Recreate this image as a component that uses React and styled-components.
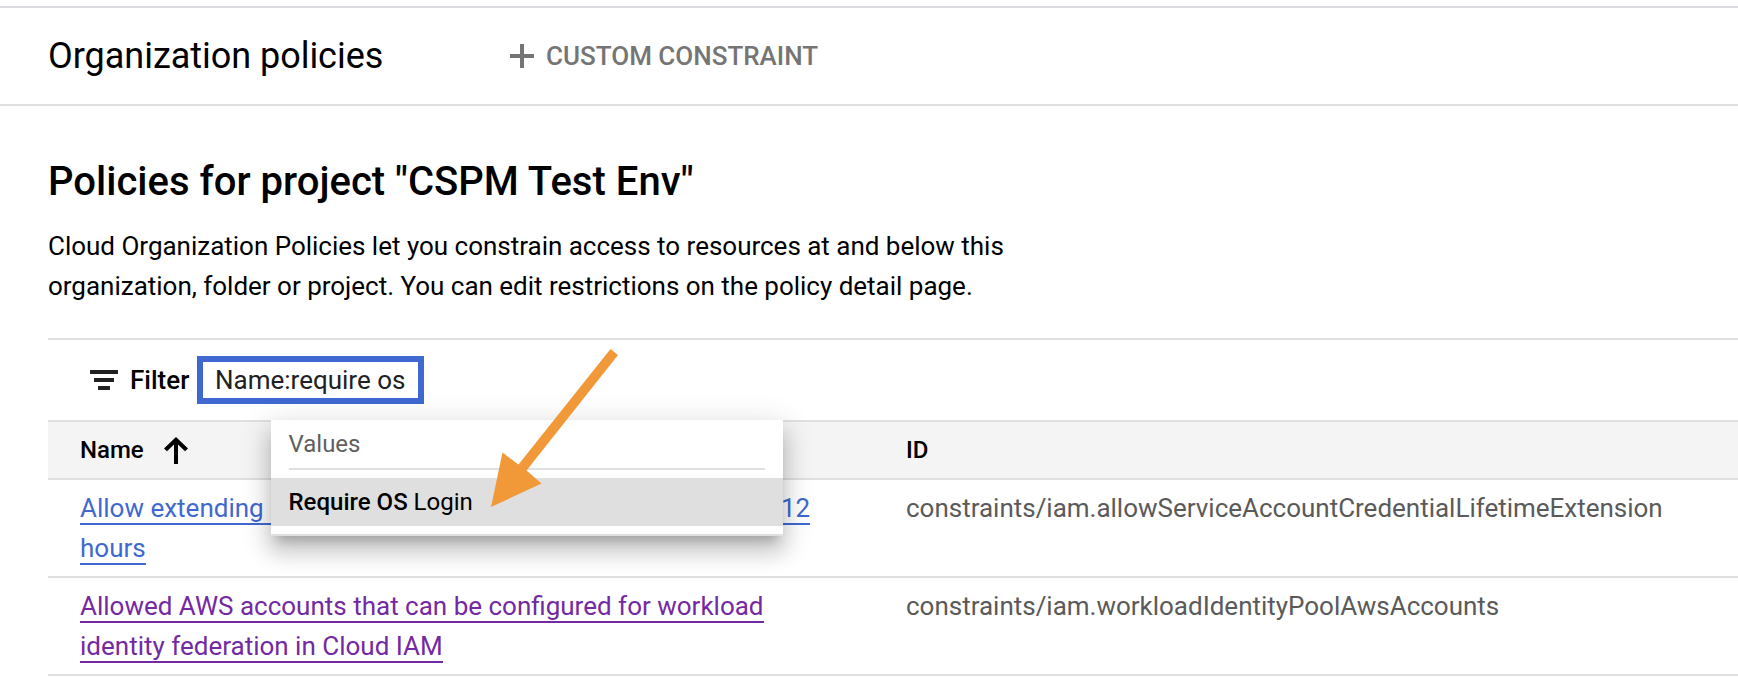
import React from "react";
import styled, { createGlobalStyle } from "styled-components";

const Global = createGlobalStyle`
  * { box-sizing: border-box; }
  body { margin: 0; background: #fff; }
`;

const Page = styled.div`
  height: 678px;
  overflow: hidden;
  padding-top: 6px;
  background: #fff;
  color: #000;
  font: 400 26px/40px Roboto, sans-serif;
`;

const Toolbar = styled.header`
  display: flex;
  align-items: center;
  height: 100px;
  padding-left: 48px;
  border-top: 2px solid #dadce0;
  border-bottom: 2px solid #e0e0e0;
`;

const PageTitle = styled.h1`
  margin: 0;
  width: 462px;
  font-size: 36px;
  font-weight: 400;
  line-height: 48px;
  letter-spacing: -0.03px;
  white-space: nowrap;
`;

const ActionButton = styled.button`
  display: flex;
  align-items: center;
  gap: 12px;
  padding: 0;
  border: 0;
  background: none;
  color: #757575;
  font: 500 26px/40px Roboto, sans-serif;
`;

const Content = styled.main`
  padding: 52px 0 0 48px;
`;

const Heading = styled.h2`
  margin: 0;
  font-size: 40px;
  font-weight: 500;
  line-height: 48px;
  letter-spacing: 0.02px;
`;

const Description = styled.p`
  margin: 20px 0 32px;
  width: 1000px;
  letter-spacing: -0.012px;
`;

const FilterBar = styled.div`
  position: relative;
  display: flex;
  align-items: center;
  height: 82px;
  padding-left: 42px;
  border-top: 2px solid #e0e0e0;
`;

const FilterLabel = styled.span`
  margin-left: 12px;
  width: 67px;
  font-weight: 500;
`;

const FilterInput = styled.div`
  width: 227px;
  height: 48px;
  padding-left: 12px;
  border: 6px solid #3f69d1;
  color: #202124;
  line-height: 36px;
  white-space: nowrap;
`;

const Suggestions = styled.div`
  position: absolute;
  z-index: 1;
  left: 223px;
  top: 80px;
  width: 512px;
  height: 116px;
  background: #fff;
  border-bottom: 2px solid #e0e0e0;
  font-size: 24px;
  box-shadow: 0 10px 10px -6px rgba(0, 0, 0, 0.2),
    0 16px 20px 2px rgba(0, 0, 0, 0.14), 0 6px 28px 4px rgba(0, 0, 0, 0.12);
`;

const SuggestionsTitle = styled.div`
  height: 50px;
  margin: 0 18px 8px;
  border-bottom: 2px solid #e0e0e0;
  color: #5f5f5f;
  line-height: 48px;
  text-indent: -0.5px;
`;

const Suggestion = styled.div`
  height: 48px;
  padding: 0 17.5px;
  background: #dfdfdf;
  line-height: 48px;
`;

const Match = styled.span`
  font-weight: 500;
`;

const Pointer = styled.svg`
  position: absolute;
  z-index: 2;
  left: 432px;
  top: 0;
`;

const Row = styled.div`
  display: grid;
  grid-template-columns: 826px 1fr;
  padding: 8px 0 8px 32px;
  border-bottom: 2px solid #e0e0e0;
  white-space: nowrap;
`;

const HeaderRow = styled(Row)`
  align-items: center;
  height: 60px;
  padding: 0 0 0 32px;
  border-top: 2px solid #e0e0e0;
  background: #f4f4f4;
  font-size: 24px;
  font-weight: 500;
`;

const SortableHeader = styled.div`
  display: flex;
  align-items: center;
  gap: 20px;
`;

const PolicyLink = styled.a`
  color: ${(p) => (p.$visited ? "#7429a4" : "#3f69d1")};
  border-bottom: 2px solid currentColor;
  text-decoration: none;
`;

const PolicyId = styled.div`
  color: #5a5a5a;
  letter-spacing: -0.012px;
`;

const policies = [
  {
    lines: ["Allow extending lifetime of OAuth 2.0 access tokens to up to 12", "hours"],
    id: "constraints/iam.allowServiceAccountCredentialLifetimeExtension",
  },
  {
    lines: ["Allowed AWS accounts that can be configured for workload", "identity federation in Cloud IAM"],
    id: "constraints/iam.workloadIdentityPoolAwsAccounts",
    visited: true,
  },
];

export default function App() {
  return (
    <Page>
      <Global />
      <Toolbar>
        <PageTitle>Organization policies</PageTitle>
        <ActionButton>
          <svg width="24" height="24" viewBox="0 0 24 24" fill="currentColor">
            <path d="M10 0h4v10h10v4H14v10h-4V14H0v-4h10z" />
          </svg>
          CUSTOM CONSTRAINT
        </ActionButton>
      </Toolbar>
      <Content>
        <Heading>Policies for project "CSPM Test Env"</Heading>
        <Description>
          Cloud Organization Policies let you constrain access to resources at and below this
          organization, folder or project. You can edit restrictions on the policy detail page.
        </Description>
        <FilterBar>
          <svg width="28" height="20" viewBox="0 0 28 20" fill="#202020">
            <path d="M0 0h28v4H0zM4 8h20v4H4zM8 16h12v4H8z" />
          </svg>
          <FilterLabel>Filter</FilterLabel>
          <FilterInput>Name:require os</FilterInput>
          <Suggestions>
            <SuggestionsTitle>Values</SuggestionsTitle>
            <Suggestion>
              <Match>Require OS</Match> Login
            </Suggestion>
          </Suggestions>
          <Pointer width="150" height="180" viewBox="480 340 150 180" fill="#f19938">
            <path d="M610.5 349L618 355L526.5 470.5L541.5 483.5L491 507L502.5 452.5L518.5 464.5Z" />
          </Pointer>
        </FilterBar>
        <HeaderRow>
          <SortableHeader>
            Name
            <svg width="24" height="27" viewBox="0 0 24 27" fill="currentColor">
              <path d="M12 0L24 11.5L21 14.3L14 7.5V27H10V7.5L3 14.3L0 11.5Z" />
            </svg>
          </SortableHeader>
          <div>ID</div>
        </HeaderRow>
        {policies.map((p) => (
          <Row key={p.id}>
            <div>
              <PolicyLink $visited={p.visited}>
                {p.lines[0]}
                <br />
                {p.lines[1]}
              </PolicyLink>
            </div>
            <PolicyId>{p.id}</PolicyId>
          </Row>
        ))}
      </Content>
    </Page>
  );
}
